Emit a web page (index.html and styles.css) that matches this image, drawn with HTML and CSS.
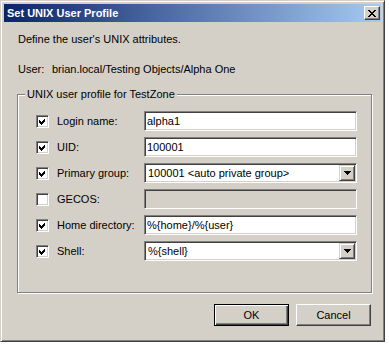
FILE: index.html
```html
<!DOCTYPE html>
<html lang="en">
<head>
    <meta charset="UTF-8">
    <title>Set UNIX User Profile</title>
    <link rel="stylesheet" href="styles.css">
</head>
<body>
    <div class="window">
        <div class="titlebar">
            <span class="title">Set UNIX User Profile</span>
            <button class="close" type="button" aria-label="Close">
                <svg width="8" height="7" viewBox="0 0 8 7" shape-rendering="crispEdges">
                    <path d="M0 0h2v1h1v1h2v-1h1v-1h2v1h-1v1h-1v1h-1v1h1v1h1v1h1v1h-2v-1h-1v-1h-2v1h-1v1h-2v-1h1v-1h1v-1h1v-1h-1v-1h-1v-1h-1z" fill="#000"/>
                </svg>
            </button>
        </div>

        <div class="dialog-body">
            <p class="intro">Define the user's UNIX attributes.</p>
            <p class="user"><span class="user-label">User:</span>brian.local/Testing Objects/Alpha One</p>

            <div class="group" role="group">
                <span class="group-title">UNIX user profile for TestZone</span>

                <div class="row">
                    <span class="check checked"><svg width="7" height="7" viewBox="0 0 7 7" shape-rendering="crispEdges"><path d="M6 0v3l-4 4l-2-2v-3l2 2z" fill="#000"/></svg></span>
                    <label for="login">Login name:</label>
                    <input class="field" id="login" type="text" value="alpha1">
                </div>
                <div class="row">
                    <span class="check checked"><svg width="7" height="7" viewBox="0 0 7 7" shape-rendering="crispEdges"><path d="M6 0v3l-4 4l-2-2v-3l2 2z" fill="#000"/></svg></span>
                    <label for="uid">UID:</label>
                    <input class="field" id="uid" type="text" value="100001">
                </div>
                <div class="row">
                    <span class="check checked"><svg width="7" height="7" viewBox="0 0 7 7" shape-rendering="crispEdges"><path d="M6 0v3l-4 4l-2-2v-3l2 2z" fill="#000"/></svg></span>
                    <label>Primary group:</label>
                    <div class="field combo">
                        <span class="combo-text">100001 &lt;auto private group&gt;</span>
                        <span class="arrow"><svg width="7" height="4" viewBox="0 0 7 4" shape-rendering="crispEdges"><path d="M0 0h7v1h-1v1h-1v1h-1v1h-1v-1h-1v-1h-1v-1h-1z" fill="#000"/></svg></span>
                    </div>
                </div>
                <div class="row">
                    <span class="check"></span>
                    <label for="gecos">GECOS:</label>
                    <input class="field disabled" id="gecos" type="text" value="" disabled>
                </div>
                <div class="row">
                    <span class="check checked"><svg width="7" height="7" viewBox="0 0 7 7" shape-rendering="crispEdges"><path d="M6 0v3l-4 4l-2-2v-3l2 2z" fill="#000"/></svg></span>
                    <label for="home">Home directory:</label>
                    <input class="field" id="home" type="text" value="%{home}/%{user}">
                </div>
                <div class="row">
                    <span class="check checked"><svg width="7" height="7" viewBox="0 0 7 7" shape-rendering="crispEdges"><path d="M6 0v3l-4 4l-2-2v-3l2 2z" fill="#000"/></svg></span>
                    <label>Shell:</label>
                    <div class="field combo">
                        <span class="combo-text">%{shell}</span>
                        <span class="arrow"><svg width="7" height="4" viewBox="0 0 7 4" shape-rendering="crispEdges"><path d="M0 0h7v1h-1v1h-1v1h-1v1h-1v-1h-1v-1h-1v-1h-1z" fill="#000"/></svg></span>
                    </div>
                </div>
            </div>

            <div class="buttons">
                <button class="btn default" type="button">OK</button>
                <button class="btn" type="button">Cancel</button>
            </div>
        </div>
    </div>
</body>
</html>
```

FILE: styles.css
```css
* {
    margin: 0;
    padding: 0;
    box-sizing: border-box;
}
:root {
    --face: #d4d0c8;
    --shadow: #808080;
    --dark: #404040;
    --light: #ffffff;
}
body {
    background: #ffffff;
    font-family: "Liberation Sans", Arial, sans-serif;
    font-size: 11px;
    line-height: 13px;
    color: #000;
}
.window {
    width: 385px;
    height: 342px;
    background: var(--face);
    border: 1px solid;
    border-color: var(--face) var(--dark) var(--dark) var(--face);
    box-shadow: inset 1px 1px var(--light), inset -1px -1px var(--shadow);
    padding: 3px;
    display: flex;
    flex-direction: column;
}
.titlebar {
    height: 18px;
    background: linear-gradient(to right, #0a246a, #a6caf0);
    display: flex;
    align-items: center;
    justify-content: space-between;
    padding: 0 1px 0 3px;
}
.title {
    color: #fff;
    font-weight: bold;
}
.close {
    width: 16px;
    height: 14px;
    background: var(--face);
    border: 1px solid;
    border-color: var(--light) var(--dark) var(--dark) var(--light);
    box-shadow: inset -1px -1px var(--shadow);
    display: flex;
    align-items: center;
    justify-content: center;
}
.dialog-body {
    padding: 11px 0 0 13px;
}
.intro,
.user {
    padding-left: 1px;
}
.user {
    margin-top: 17px;
}
.user-label {
    display: inline-block;
    width: 34px;
}
.group {
    position: relative;
    width: 355px;
    margin-top: 18px;
    border: 1px solid var(--shadow);
    box-shadow: inset 1px 1px var(--light), 1px 1px var(--light);
    padding: 16px 14px 31px 18px;
    display: flex;
    flex-direction: column;
    gap: 6px;
}
.group-title {
    position: absolute;
    top: -7px;
    left: 7px;
    padding: 0 2px;
    background: var(--face);
}
.row {
    display: grid;
    grid-template-columns: 13px 79px 213px;
    column-gap: 8px;
    align-items: center;
    height: 20px;
}
.check {
    width: 13px;
    height: 13px;
    background: #fff;
    border: 1px solid;
    border-color: var(--shadow) var(--light) var(--light) var(--shadow);
    box-shadow: inset 1px 1px var(--dark), inset -1px -1px var(--face);
    display: flex;
    align-items: center;
    justify-content: center;
}
.field {
    width: 213px;
    height: 20px;
    font: inherit;
    color: #000;
    background: #fff;
    border: 1px solid;
    border-color: var(--shadow) var(--light) var(--light) var(--shadow);
    box-shadow: inset 1px 1px var(--dark), inset -1px -1px var(--face);
    padding: 0 2px;
    outline: none;
}
.field.disabled {
    background: var(--face);
}
.combo {
    display: flex;
    align-items: center;
    padding: 1px;
}
.combo-text {
    flex: 1;
    padding-left: 2px;
}
.arrow {
    width: 16px;
    height: 16px;
    background: var(--face);
    border: 1px solid;
    border-color: var(--face) var(--dark) var(--dark) var(--face);
    box-shadow: inset 1px 1px var(--light), inset -1px -1px var(--shadow);
    display: flex;
    align-items: center;
    justify-content: center;
}
.buttons {
    width: 355px;
    margin-top: 11px;
    padding-right: 1px;
    display: flex;
    justify-content: flex-end;
    gap: 7px;
}
.btn {
    width: 75px;
    height: 22px;
    font: inherit;
    color: #000;
    background: var(--face);
    border: 1px solid;
    border-color: var(--light) var(--dark) var(--dark) var(--light);
    box-shadow: inset -1px -1px var(--shadow);
}
.btn.default {
    border-color: #000;
    box-shadow: inset 1px 1px var(--light), inset -1px -1px var(--dark), inset -2px -2px var(--shadow);
}
```
